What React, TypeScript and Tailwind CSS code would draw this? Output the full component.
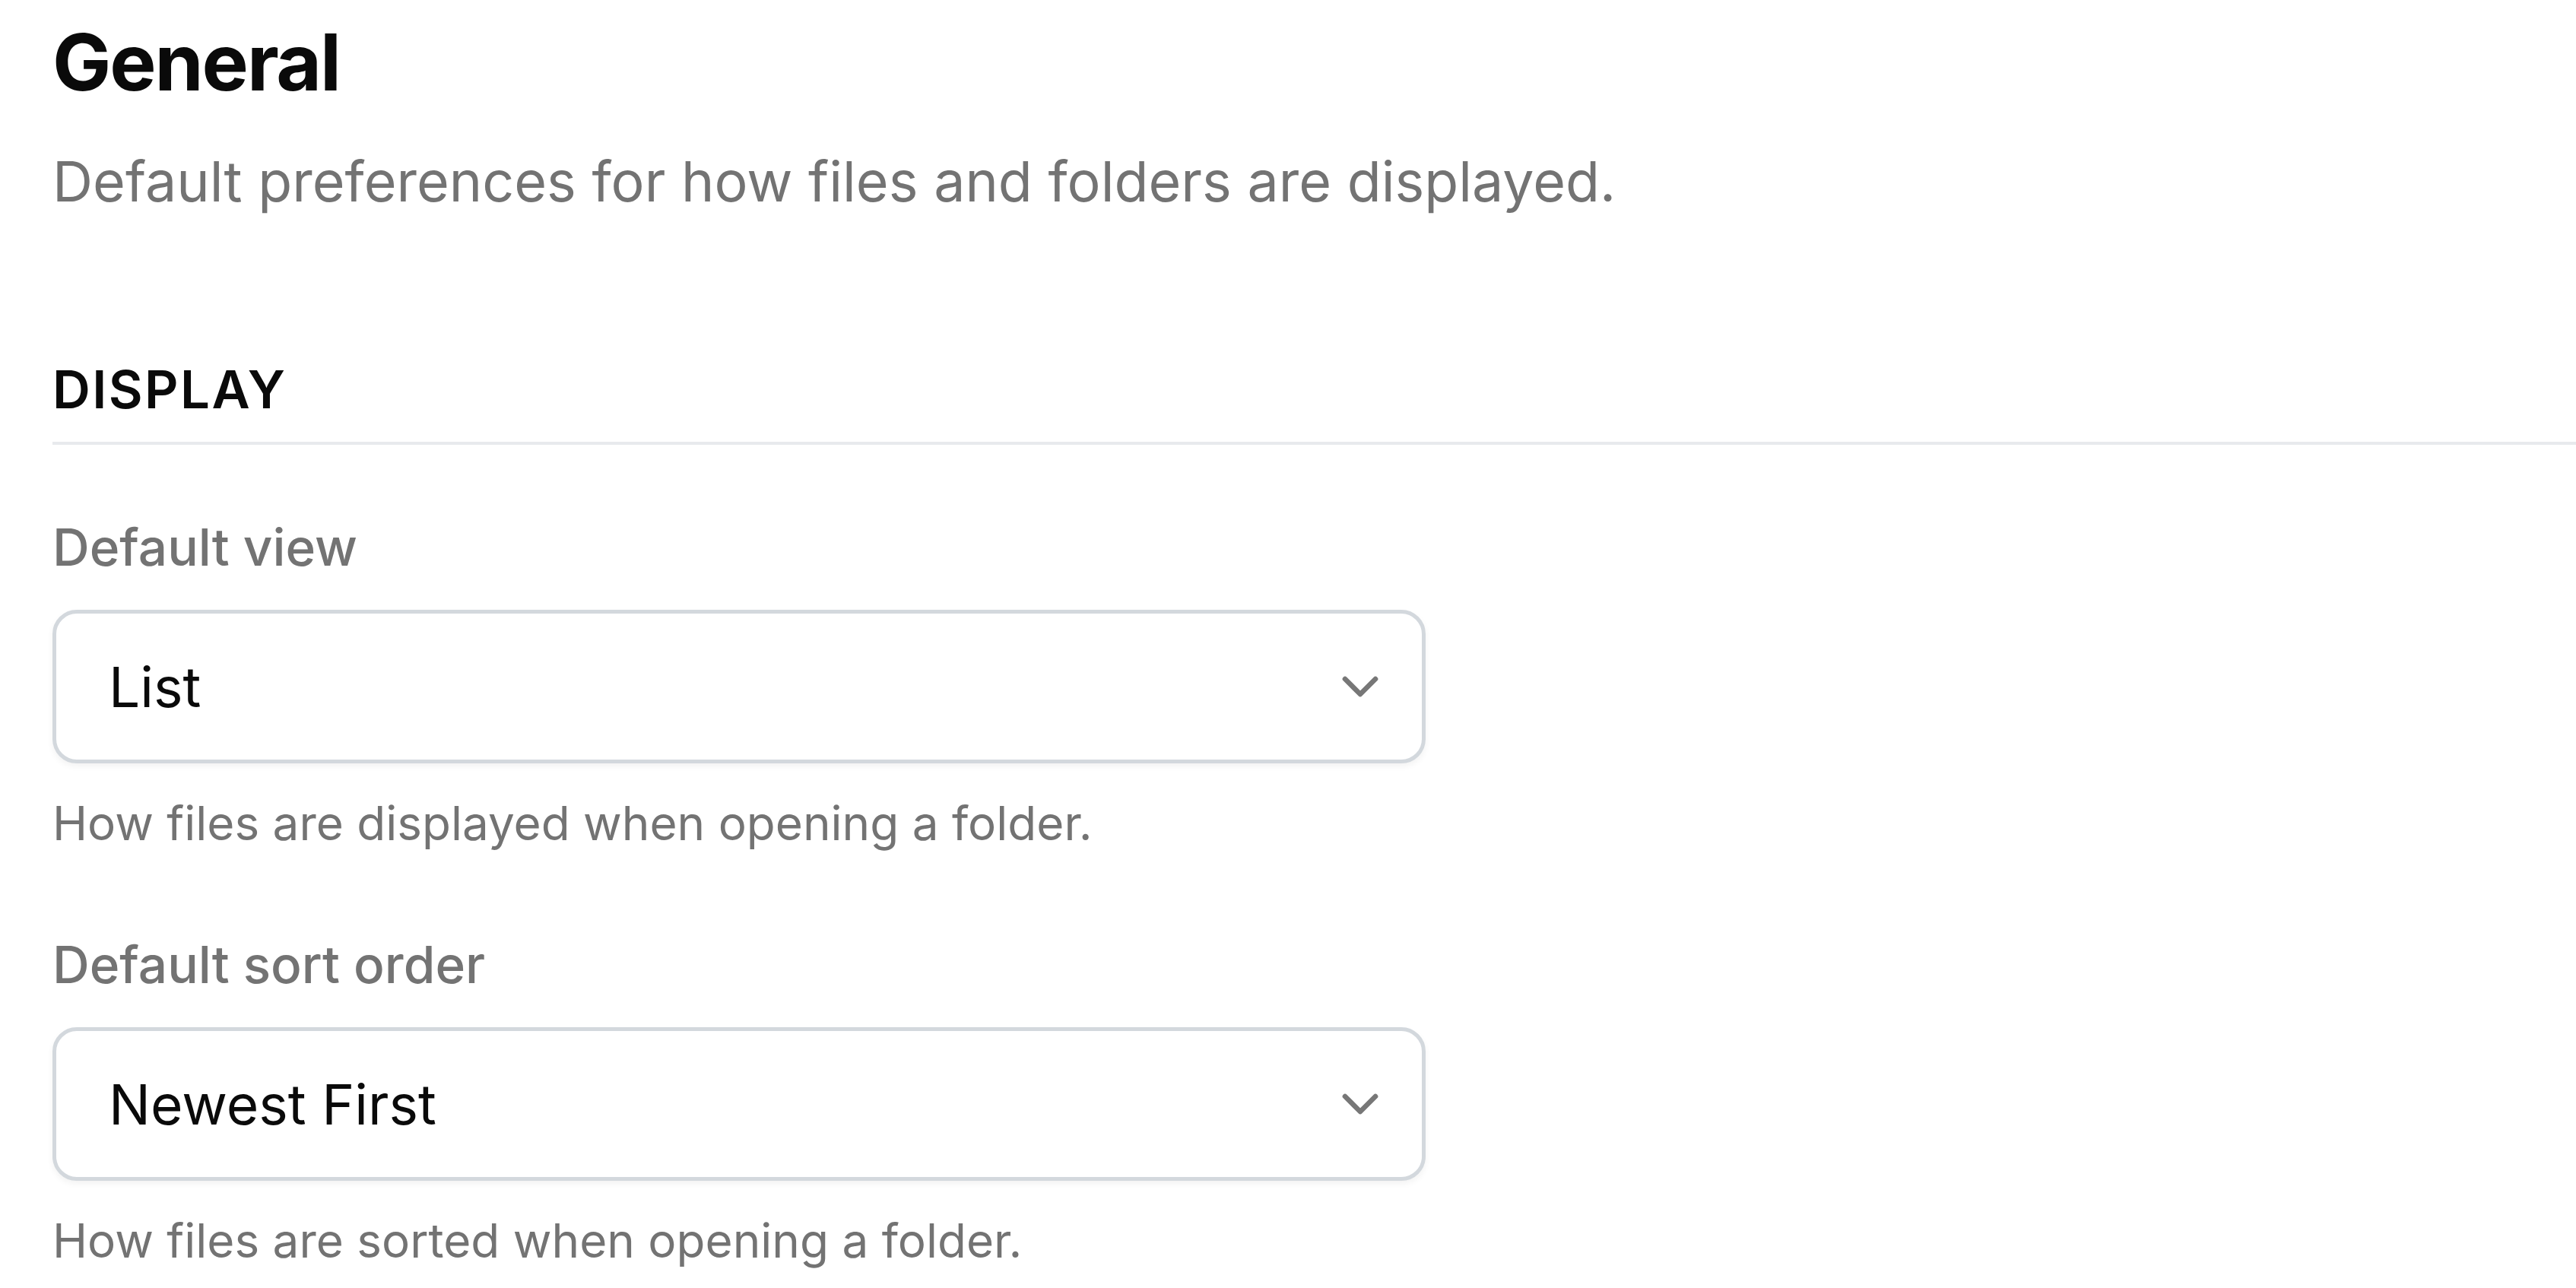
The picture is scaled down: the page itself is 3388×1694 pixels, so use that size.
import { ChevronDown } from 'lucide-react';

interface SelectFieldProps {
  label: string;
  value: string;
  hint: string;
  first?: boolean;
}

function SelectField({ label, value, hint, first }: SelectFieldProps) {
  return (
    <div className={first ? 'mt-[93px]' : 'mt-[106px]'}>
      <label className="block text-[67.5px] leading-[84px] font-medium text-[#737373]">{label}</label>
      <button
        type="button"
        className="mt-[40px] flex h-[202px] w-[1806px] items-center justify-between rounded-[32px] border-[5px] border-[#d3d8dd] bg-white pl-[69px] pr-[41px] text-left shadow-[0_4px_8px_rgba(0,0,0,0.05)]"
      >
        <span className="text-[73px] leading-none text-[#0a0a0a]">{value}</span>
        <ChevronDown className="h-[80px] w-[80px] text-[#777777]" strokeWidth={2} />
      </button>
      <p className="mt-[41px] text-[62px] leading-[76px] text-[#737373]">{hint}</p>
    </div>
  );
}

export default function App() {
  return (
    <div className="min-h-screen bg-white pl-[69px] pt-[17px] font-['Inter',sans-serif]">
      <h1 className="text-[103px] leading-[130px] font-bold tracking-[-0.02em] text-[#0a0a0a]">General</h1>
      <p className="mt-[39px] text-[73.5px] leading-[105px] text-[#737373]">
        Default preferences for how files and folders are displayed.
      </p>

      <h2 className="mt-[179px] text-[69px] leading-[84px] font-semibold tracking-[0.035em] text-[#0a0a0a]">DISPLAY</h2>
      <div className="mt-[27px] h-[4px] bg-[#e8eaed]" />

      <SelectField first label="Default view" value="List" hint="How files are displayed when opening a folder." />
      <SelectField
        label="Default sort order"
        value="Newest First"
        hint="How files are sorted when opening a folder."
      />
    </div>
  );
}
